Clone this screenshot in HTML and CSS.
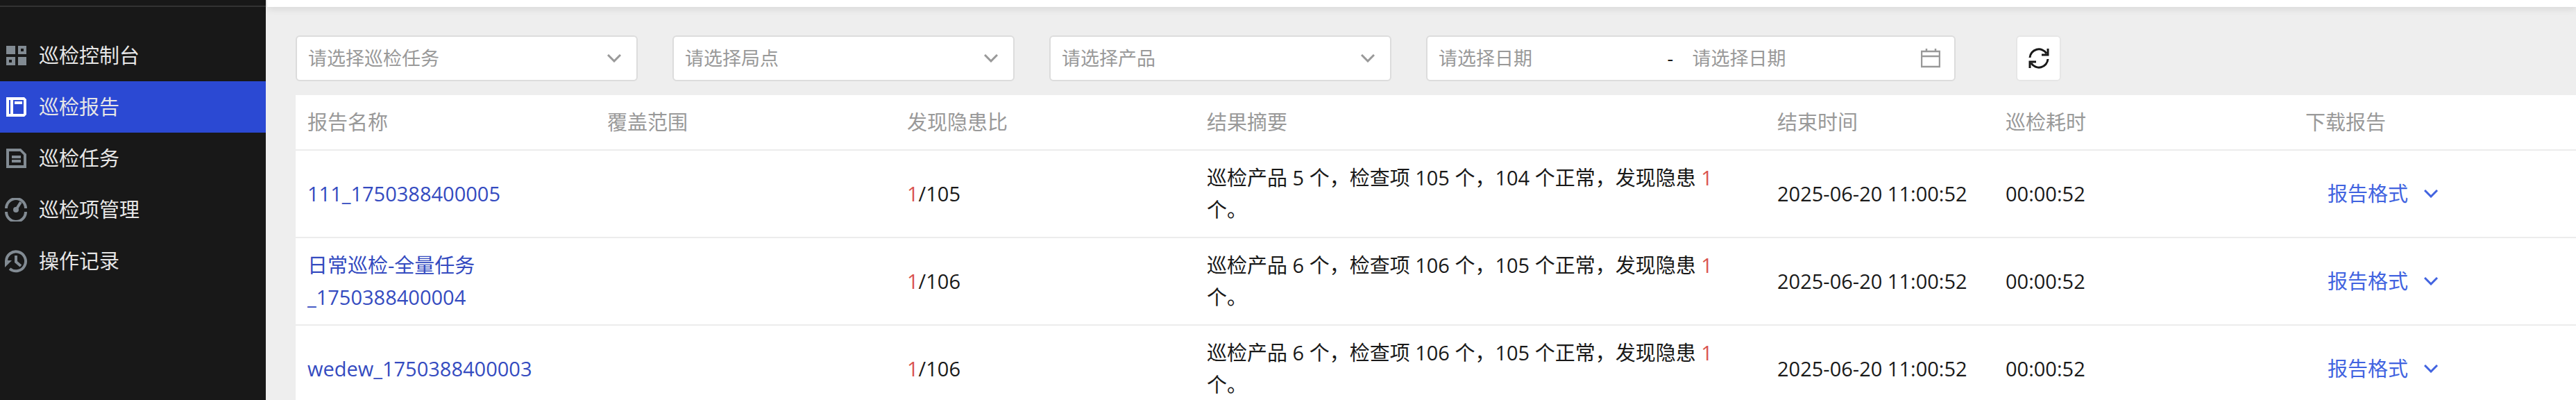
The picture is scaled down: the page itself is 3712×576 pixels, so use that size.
FILE: index.html
```html
<!DOCTYPE html>
<html lang="zh-CN">
<head>
  <meta charset="UTF-8">
  <meta name="viewport" content="width=device-width, initial-scale=1.0">
  <title>巡检报告</title>
  <link rel="stylesheet" href="styles.css">
</head>
<body>
  <div class="layout">
    <aside class="sidebar">
      <div class="sidebar-top"></div>
      <nav class="menu">
        <a href="#" class="menu-item">
          <svg class="menu-icon" viewBox="0 0 34 34" fill="currentColor" fill-rule="evenodd">
            <path d="M3 3h13v12H3z M20 3h12v12H20z M24 7h4v4h-4z M3 19h13v12H3z M7 23h4v4H7z M20 19h12v12H20z"/>
          </svg>
          <span>巡检控制台</span>
        </a>
        <a href="#" class="menu-item active">
          <svg class="menu-icon" viewBox="0 0 34 34" fill="currentColor" fill-rule="evenodd">
            <path d="M3 3h26l3 3v22l-3 3H3z M7 7v20h2V7z M13 7v20h15V7z M15 9h11v4H15z"/>
          </svg>
          <span>巡检报告</span>
        </a>
        <a href="#" class="menu-item">
          <svg class="menu-icon" viewBox="0 0 34 34" fill="currentColor" fill-rule="evenodd">
            <path d="M3 3h21l8 8v20H3z M7 7v20h21V12l-5-5z M11 13h13v4H11z M11 19h13v4H11z"/>
          </svg>
          <span>巡检任务</span>
        </a>
        <a href="#" class="menu-item">
          <svg class="menu-icon" viewBox="0 0 34 34" fill="none" stroke="currentColor" stroke-width="4">
            <path d="M3 15a14 14 0 0 1 28 0 M3 20a14 14 0 0 0 28 0"/>
            <path d="M17 17l7-11"/>
            <circle cx="17" cy="17" r="4" fill="currentColor" stroke="none"/>
          </svg>
          <span>巡检项管理</span>
        </a>
        <a href="#" class="menu-item">
          <svg class="menu-icon" viewBox="0 0 34 34" fill="none" stroke="currentColor" stroke-width="4">
            <path d="M3 17a14 14 0 1 1 5 11"/>
            <path d="M17 9v9l7 6"/>
            <path d="M1 16h10L1 26z" fill="currentColor" stroke="none"/>
          </svg>
          <span>操作记录</span>
        </a>
      </nav>
    </aside>

    <main class="main">
      <header class="topbar"></header>

      <form class="filters">
        <div class="select-box">
          <select aria-label="巡检任务">
            <option>请选择巡检任务</option>
          </select>
          <svg class="arrow" viewBox="0 0 20 12"><path d="M1 1l9 9 9-9"/></svg>
        </div>
        <div class="select-box">
          <select aria-label="局点">
            <option>请选择局点</option>
          </select>
          <svg class="arrow" viewBox="0 0 20 12"><path d="M1 1l9 9 9-9"/></svg>
        </div>
        <div class="select-box">
          <select aria-label="产品">
            <option>请选择产品</option>
          </select>
          <svg class="arrow" viewBox="0 0 20 12"><path d="M1 1l9 9 9-9"/></svg>
        </div>
        <div class="date-box">
          <input type="text" placeholder="请选择日期" aria-label="开始日期">
          <span class="date-sep">-</span>
          <input type="text" placeholder="请选择日期" aria-label="结束日期">
          <svg class="calendar" viewBox="0 0 28 28">
            <path d="M1 4h26v22H1z M1 11h26 M8 0v4 M21 0v4"/>
          </svg>
        </div>
        <button type="button" class="refresh" aria-label="刷新">
          <svg viewBox="0 0 30 30">
            <path d="M2 14a13 13 0 0 1 24-6 M28 1v9h-9 M28 16a13 13 0 0 1-24 6 M2 29v-9h9"/>
          </svg>
        </button>
      </form>

      <table class="report-table">
        <colgroup>
          <col class="col-m">
          <col class="col-m">
          <col class="col-m">
          <col class="col-l">
          <col class="col-s">
          <col class="col-m">
          <col>
        </colgroup>
        <thead>
          <tr>
            <th>报告名称</th>
            <th>覆盖范围</th>
            <th>发现隐患比</th>
            <th>结果摘要</th>
            <th>结束时间</th>
            <th>巡检耗时</th>
            <th>下载报告</th>
          </tr>
        </thead>
        <tbody>
          <tr>
            <td><a href="#">111_1750388400005</a></td>
            <td></td>
            <td><span class="risk">1</span>/105</td>
            <td>巡检产品 5 个，检查项 105 个，104 个正常，发现隐患 <span class="risk">1</span> 个。</td>
            <td>2025-06-20 11:00:52</td>
            <td>00:00:52</td>
            <td><button type="button" class="format">报告格式<svg class="arrow" viewBox="0 0 20 12"><path d="M1 1l9 9 9-9"/></svg></button></td>
          </tr>
          <tr>
            <td><a href="#">日常巡检-全量任务_1750388400004</a></td>
            <td></td>
            <td><span class="risk">1</span>/106</td>
            <td>巡检产品 6 个，检查项 106 个，105 个正常，发现隐患 <span class="risk">1</span> 个。</td>
            <td>2025-06-20 11:00:52</td>
            <td>00:00:52</td>
            <td><button type="button" class="format">报告格式<svg class="arrow" viewBox="0 0 20 12"><path d="M1 1l9 9 9-9"/></svg></button></td>
          </tr>
          <tr>
            <td><a href="#">wedew_1750388400003</a></td>
            <td></td>
            <td><span class="risk">1</span>/106</td>
            <td>巡检产品 6 个，检查项 106 个，105 个正常，发现隐患 <span class="risk">1</span> 个。</td>
            <td>2025-06-20 11:00:52</td>
            <td>00:00:52</td>
            <td><button type="button" class="format">报告格式<svg class="arrow" viewBox="0 0 20 12"><path d="M1 1l9 9 9-9"/></svg></button></td>
          </tr>
        </tbody>
      </table>
    </main>
  </div>
</body>
</html>
```

FILE: styles.css
```css
* {
  box-sizing: border-box;
}
body {
  margin: 0;
  height: 100vh;
  overflow: hidden;
  font-family: "Open Sans", "Noto Sans CJK SC", sans-serif;
  font-size: 29px;
  line-height: 46px;
  color: #191919;
  background: #eee;
}
a {
  color: #344bc0;
  text-decoration: none;
}
button, input, select {
  font: inherit;
  color: inherit;
}
.layout {
  display: flex;
  min-height: 100vh;
}

/* sidebar */
.sidebar {
  flex: none;
  width: 383px;
  background: #181818;
}
.sidebar-top {
  height: 10px;
  border-bottom: 2px solid #333;
}
.menu {
  padding-top: 33px;
}
.menu-item {
  display: flex;
  align-items: center;
  gap: 16px;
  height: 74px;
  padding: 0 6px;
  color: #e6e6e6;
}
.menu-icon {
  width: 34px;
  height: 34px;
  color: #828b93;
}
.menu-item.active {
  background: #2b49d3;
}
.menu-item.active .menu-icon {
  color: #fff;
}

/* content */
.main {
  flex: 1;
  min-width: 0;
}
.topbar {
  height: 10px;
  margin-left: 2px;
  background: #fff;
  box-shadow: 0 2px 12px rgba(0,0,0,0.12);
}
.filters {
  display: flex;
  gap: 50px;
  padding: 41px 43px 20px;
  font-size: 27px;
  color: #999;
}
.select-box {
  position: relative;
  width: 493px;
}
.select-box select {
  width: 100%;
  height: 66px;
  padding: 0 60px 0 16px;
  border: 2px solid #dcdcdc;
  border-radius: 6px;
  background: #fff;
  appearance: none;
}
.arrow {
  width: 20px;
  height: 12px;
  fill: none;
  stroke: currentColor;
  stroke-width: 3;
}
.select-box .arrow {
  position: absolute;
  right: 24px;
  top: 27px;
  pointer-events: none;
}
.date-box {
  display: flex;
  align-items: center;
  width: 763px;
  height: 66px;
  padding: 0 20px 0 16px;
  border: 2px solid #dcdcdc;
  border-radius: 6px;
  background: #fff;
}
.date-box input {
  width: 330px;
  min-width: 0;
  padding: 0;
  border: none;
  outline: none;
  background: none;
}
.date-box input::placeholder {
  color: #999;
  opacity: 1;
}
.date-sep {
  flex: none;
  width: 36px;
  color: #191919;
}
.calendar {
  flex: none;
  width: 28px;
  height: 28px;
  fill: none;
  stroke: #999;
  stroke-width: 2.5;
}
.refresh {
  display: flex;
  align-items: center;
  justify-content: center;
  width: 65px;
  height: 66px;
  margin-left: 37px;
  padding: 0;
  border: 2px solid #e6e6e6;
  border-radius: 6px;
  background: #fff;
  cursor: pointer;
}
.refresh svg {
  width: 30px;
  height: 30px;
  fill: none;
  stroke: #191919;
  stroke-width: 3;
}

/* table */
.report-table {
  width: calc(100% - 43px);
  margin-left: 43px;
  border-collapse: separate;
  border-spacing: 0;
  table-layout: fixed;
  background: #fff;
}
.col-s {
  width: 329px;
}
.col-m {
  width: 432px;
}
.col-l {
  width: 822px;
}
.report-table th, .report-table td {
  padding: 16px 17px;
  border-bottom: 2px solid #ececec;
  text-align: left;
  vertical-align: middle;
}
.report-table th {
  font-weight: 400;
  color: #999;
}
.risk {
  color: #d9534f;
}
.format {
  display: flex;
  align-items: center;
  gap: 23px;
  padding: 0 32px;
  border: none;
  background: none;
  color: #4163e0;
  cursor: pointer;
}
```
